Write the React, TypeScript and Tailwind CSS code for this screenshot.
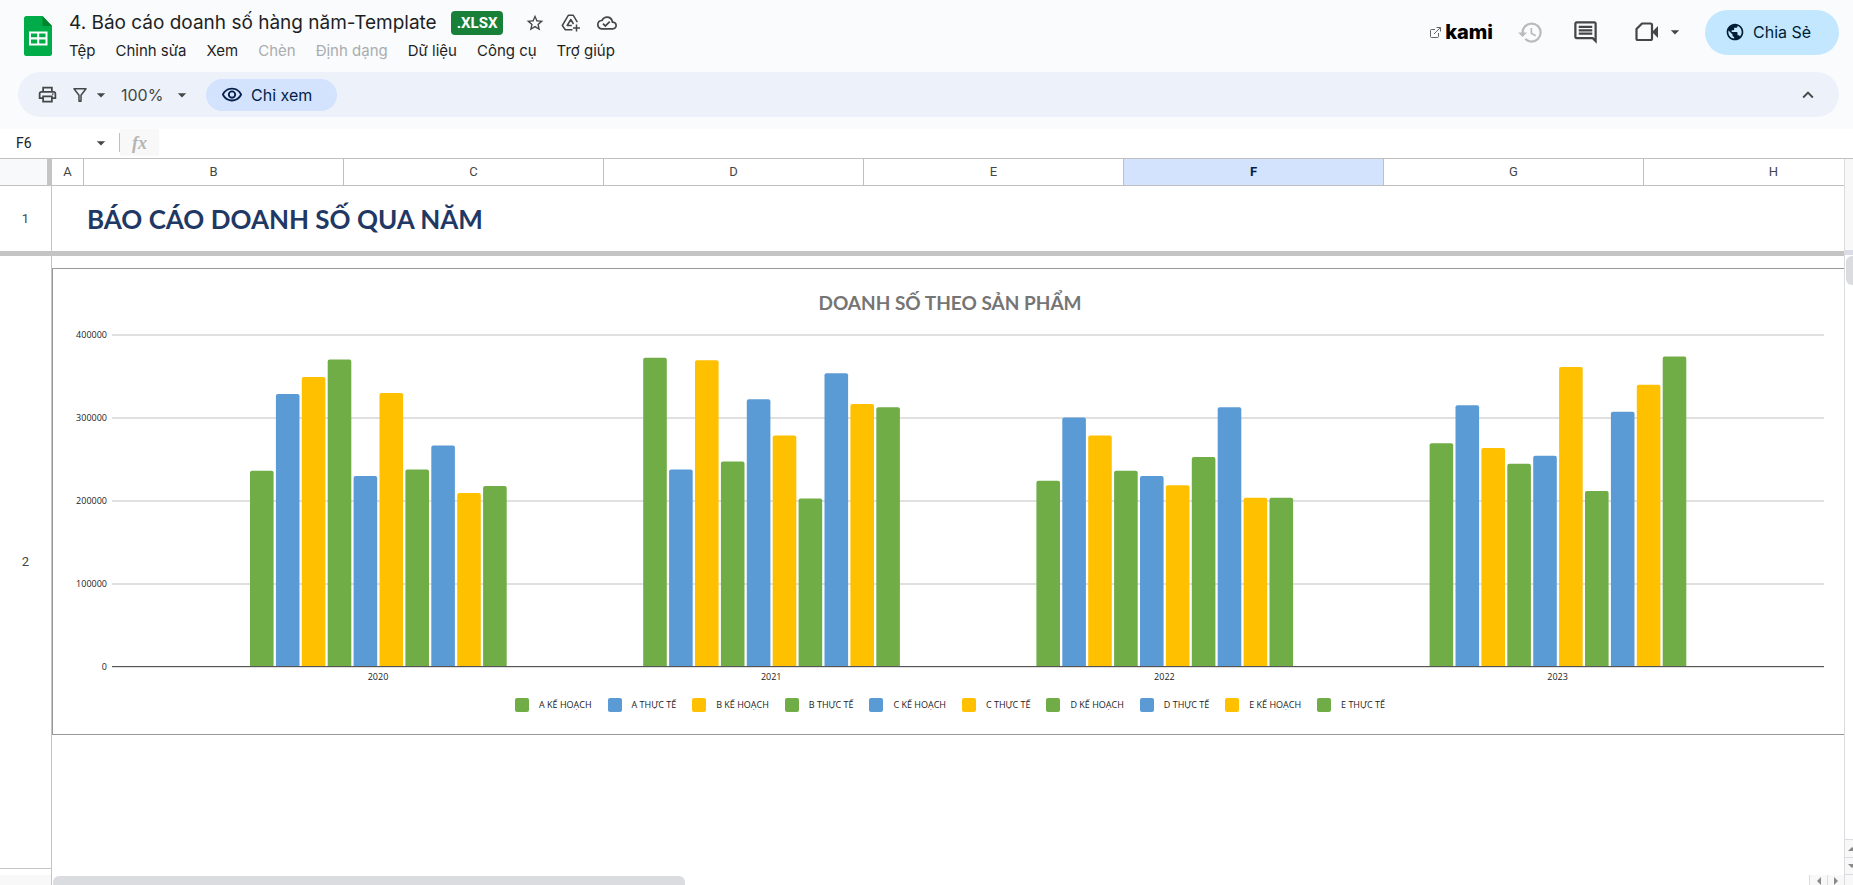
import { useState } from 'react'
import type { ReactNode } from 'react'
import {
  MdArrowDropDown,
  MdHistory,
  MdKeyboardArrowUp,
  MdOutlineCloudDone,
  MdOutlineComment,
  MdOutlinePrint,
  MdOutlineVisibility,
  MdPublic,
  MdStarBorder,
} from 'react-icons/md'

interface MenuItem {
  label: string
  disabled?: boolean
}

interface YearGroup {
  year: string
  values: number[]
}

const MENU: MenuItem[] = [
  { label: 'Tệp' },
  { label: 'Chỉnh sửa' },
  { label: 'Xem' },
  { label: 'Chèn', disabled: true },
  { label: 'Định dạng', disabled: true },
  { label: 'Dữ liệu' },
  { label: 'Công cụ' },
  { label: 'Trợ giúp' },
]

const COLUMNS = ['B', 'C', 'D', 'E', 'F', 'G', 'H']

const GREEN = '#70ad47'
const BLUE = '#5b9bd5'
const YELLOW = '#ffc000'

const SERIES = [
  { name: 'A KẾ HOẠCH', color: GREEN },
  { name: 'A THỰC TẾ', color: BLUE },
  { name: 'B KẾ HOẠCH', color: YELLOW },
  { name: 'B THỰC TẾ', color: GREEN },
  { name: 'C KẾ HOẠCH', color: BLUE },
  { name: 'C THỰC TẾ', color: YELLOW },
  { name: 'D KẾ HOẠCH', color: GREEN },
  { name: 'D THỰC TẾ', color: BLUE },
  { name: 'E KẾ HOẠCH', color: YELLOW },
  { name: 'E THỰC TẾ', color: GREEN },
]

const DATA: YearGroup[] = [
  { year: '2020', values: [236500, 329000, 349500, 370500, 230000, 330000, 238000, 267000, 209500, 218000] },
  { year: '2021', values: [372500, 238000, 369500, 247500, 322500, 279000, 203000, 354000, 317000, 313000] },
  { year: '2022', values: [224500, 300500, 279000, 236500, 230000, 219000, 253000, 313000, 204000, 204000] },
  { year: '2023', values: [269500, 315500, 264000, 245000, 254500, 361500, 212000, 307500, 340000, 374000] },
]

const TICKS = [400000, 300000, 200000, 100000, 0]

// Plot geometry, in the units of the chart's viewBox
const PLOT_LEFT = 59
const PLOT_RIGHT = 1771
const PLOT_TOP = 10
const PLOT_HEIGHT = 332
const GROUP_START = 197
const GROUP_STEP = 393.2
const BAR_STEP = 25.9
const BAR_WIDTH = 23.6

function yFor(value: number): number {
  return PLOT_TOP + PLOT_HEIGHT * (1 - value / 400000)
}

function barPath(x: number, value: number): string {
  const top = yFor(value)
  const bottom = yFor(0)
  return `M${x} ${bottom}V${top + 2}q0 -2 2 -2h${BAR_WIDTH - 4}q2 0 2 2V${bottom}z`
}

function SheetsLogo() {
  return (
    <svg width="28" height="40" viewBox="0 0 28 40" aria-hidden="true">
      <path d="M2.500 0H18.500L28 10V37.500a2.500 2.500 0 0 1-2.500 2.500h-23A2.500 2.500 0 0 1 0 37.500v-35A2.500 2.500 0 0 1 2.500 0z" fill="#00ac47" />
      <path d="M18.500 0L28 10h-9.500z" fill="#00832d" />
      <path d="M5 15.500h18.500v14H5zM7 17.500v3.800h6.200v-3.800zm8.200 0v3.800h6.300v-3.800zM7 23.500v4h6.200v-4zm8.200 0v4h6.300v-4z" fill="#fff" fillRule="evenodd" />
    </svg>
  )
}

function DriveAddIcon() {
  return (
    <svg width="20" height="20" viewBox="0 0 20 20" fill="none" stroke="#444746" strokeWidth="1.500" strokeLinejoin="round" aria-hidden="true">
      <path d="M11.500 16.800H4.300L1.300 12.500L7.300 2.300H12.300L16.300 9.200" />
      <path d="M10.800 12.500H6.200L9.800 6.500L12.500 11" />
      <path d="M15.500 11.500v7M12 15h7" />
    </svg>
  )
}

function CameraIcon() {
  return (
    <svg width="24" height="20" viewBox="0 0 24 20" fill="none" aria-hidden="true">
      <path d="M7 1.500H15.500a1.500 1.500 0 0 1 1.500 1.500V16.500a1.500 1.500 0 0 1-1.500 1.500H3A1.500 1.500 0 0 1 1.500 16.500V7z" stroke="#444746" strokeWidth="2.200" strokeLinejoin="round" />
      <path d="M17 10l6-6v12z" fill="#444746" />
    </svg>
  )
}

function FilterIcon() {
  return (
    <svg width="16" height="16" viewBox="0 0 16 16" fill="none" aria-hidden="true">
      <path d="M2 1.800h12L9 8.200v6H7v-6z" stroke="#444746" strokeWidth="1.500" strokeLinejoin="round" />
    </svg>
  )
}

function ExternalIcon() {
  return (
    <svg width="11" height="11" viewBox="0 0 11 11" fill="none" stroke="#555" strokeWidth="0.900" aria-hidden="true">
      <path d="M5 2.500H1.500a1 1 0 0 0-1 1V9.500a1 1 0 0 0 1 1H7.500a1 1 0 0 0 1-1V6" />
      <path d="M4 7L10.300.700M6.500.500h4v4" />
    </svg>
  )
}

function IconButton({ label, children }: { label: string; children: ReactNode }) {
  return (
    <button type="button" aria-label={label} className="flex items-center justify-center">
      {children}
    </button>
  )
}

function Header() {
  return (
    <header className="flex h-18 items-start pr-3.5 pl-6">
      <div className="mt-4 shrink-0">
        <SheetsLogo />
      </div>
      <div className="ml-[17px] flex-1">
        <div className="mt-[11px] flex h-6 items-center">
          <h1 className="text-[19px] leading-6 whitespace-nowrap text-[#1f1f1f]">4. Báo cáo doanh số hàng năm-Template</h1>
          <span className="ml-3.5 h-6 rounded bg-[#188038] px-1.5 font-['Roboto'] text-[15px] leading-6 font-bold text-white">.XLSX</span>
          <div className="ml-[22px] flex items-center gap-4 text-[#444746]">
            <IconButton label="Gắn dấu sao"><MdStarBorder size={20} /></IconButton>
            <IconButton label="Thêm vào Drive"><DriveAddIcon /></IconButton>
            <IconButton label="Trạng thái lưu"><MdOutlineCloudDone size={20} /></IconButton>
          </div>
        </div>
        <nav className="mt-1 flex gap-5 text-[15px] leading-6 text-[#1f1f1f]">
          {MENU.map((item) => (
            <button key={item.label} type="button" disabled={item.disabled} className="whitespace-nowrap disabled:text-[#aaacae]">
              {item.label}
            </button>
          ))}
        </nav>
      </div>
      <div className="mt-2.5 flex h-11 shrink-0 items-center">
        <a href="#kami" className="flex items-center gap-1 text-black">
          <ExternalIcon />
          <span className="text-xl leading-6 font-extrabold">kami</span>
        </a>
        <div className="ml-6 flex items-center gap-7 text-[#444746]">
          <span className="text-[#b9bbbd]">
            <IconButton label="Lịch sử"><MdHistory size={27} /></IconButton>
          </span>
          <IconButton label="Nhận xét"><MdOutlineComment size={27} /></IconButton>
          <button type="button" aria-label="Cuộc gọi" className="ml-2 flex items-center gap-1.5">
            <CameraIcon />
            <MdArrowDropDown size={20} />
          </button>
        </div>
        <button type="button" className="ml-5 flex h-[45px] w-[134px] items-center gap-2 rounded-full bg-[#c2e7ff] pl-5 text-base text-[#001d35]">
          <MdPublic size={20} />
          Chia Sẻ
        </button>
      </div>
    </header>
  )
}

function Toolbar() {
  return (
    <div className="mr-3.5 mb-3 ml-4.5 flex h-[45px] items-center rounded-full bg-[#edf2fa] pr-5 pl-[19px] text-[#444746]">
      <IconButton label="In"><MdOutlinePrint size={21} /></IconButton>
      <button type="button" aria-label="Bộ lọc" className="ml-3.5 flex items-center gap-[3px]">
        <FilterIcon />
        <MdArrowDropDown size={20} />
      </button>
      <label className="ml-2.5 flex items-center gap-[9px]">
        <select aria-label="Thu phóng" defaultValue="100%" className="w-[42px] appearance-none bg-transparent text-base">
          <option>100%</option>
        </select>
        <MdArrowDropDown size={20} />
      </label>
      <button type="button" className="ml-3.5 flex h-8 w-[131px] items-center gap-2 rounded-full bg-[#d3e3fd] pl-[15px] text-base text-[#041e49]">
        <MdOutlineVisibility size={22} />
        Chỉ xem
      </button>
      <div className="ml-auto">
        <IconButton label="Ẩn trình đơn"><MdKeyboardArrowUp size={22} /></IconButton>
      </div>
    </div>
  )
}

function FormulaBar() {
  const [cell, setCell] = useState('F6')
  return (
    <div className="flex h-[30px] items-center border-b border-[#c0c0c0] bg-white pb-0.5">
      <input
        aria-label="Hộp tên"
        value={cell}
        onChange={(e) => setCell(e.target.value)}
        className="w-[91px] pl-4 font-['Roboto'] text-sm text-[#202124] outline-none"
      />
      <MdArrowDropDown size={20} color="#444746" />
      <div className="ml-2 h-[19px] w-px bg-[#c0c0c0]" />
      <label htmlFor="formula" className="flex h-full w-[39px] items-center justify-center bg-[#f8f8f8] font-['Liberation_Serif'] text-lg leading-5 font-bold text-[#b4b4b4] italic">
        fx
      </label>
      <input id="formula" className="h-full flex-1 px-2 font-['Roboto'] text-sm outline-none" />
    </div>
  )
}

function SalesChart() {
  return (
    <figure className="mt-3 flex h-[467px] w-[1796px] flex-col border border-[#999] bg-white">
      <figcaption className="mt-[18px] text-center font-['Lato','Open_Sans',sans-serif] text-[19px] leading-8 font-bold text-[#757575]">
        DOANH SỐ THEO SẢN PHẨM
      </figcaption>
      <svg viewBox="0 0 1794 370" className="mt-1.5 h-[370px] w-full shrink-0 font-['Open_Sans'] text-[9px]" role="img" aria-label="Doanh số theo sản phẩm">
        {TICKS.map((tick) => (
          <g key={tick}>
            <rect x={PLOT_LEFT} y={yFor(tick) - 1} width={PLOT_RIGHT - PLOT_LEFT} height="2" fill="#e0e0e0" />
            <text x="54" y={yFor(tick) + 3} textAnchor="end" fill="#222">{tick}</text>
          </g>
        ))}
        {DATA.map((group, g) => {
          const start = GROUP_START + g * GROUP_STEP
          return (
            <g key={group.year}>
              {group.values.map((value, i) => (
                <path key={i} d={barPath(start + i * BAR_STEP, value)} fill={SERIES[i].color} />
              ))}
              <text x={start + 128} y={yFor(0) + 13} textAnchor="middle" fill="#222">{group.year}</text>
            </g>
          )
        })}
        <rect x={PLOT_LEFT} y={yFor(0) - 1} width={PLOT_RIGHT - PLOT_LEFT} height="1" fill="#555" />
      </svg>
      <ul className="mt-0.5 flex items-center justify-center gap-4 font-['Open_Sans'] text-[9px] leading-4 text-[#222]">
        {SERIES.map((s) => (
          <li key={s.name} className="flex items-center gap-2.5">
            <span className="size-3.5 rounded-xs" style={{ backgroundColor: s.color }} />
            {s.name}
          </li>
        ))}
      </ul>
    </figure>
  )
}

function Sheet() {
  return (
    <table className="w-[1904px] table-fixed border-separate border-spacing-0 font-['Roboto'] text-[13px] text-[#444746]">
      <colgroup>
        <col className="w-[52px]" />
        <col className="w-8" />
        {COLUMNS.map((c) => <col key={c} className="w-[260px]" />)}
      </colgroup>
      <thead>
        <tr className="h-[27px]">
          <th aria-label="Chọn tất cả" className="border-r-[5px] border-b border-[#c0c0c0] border-r-[#c4c4c4] bg-[#f8f9fa] p-0" />
          <th scope="col" className="border-r border-b border-[#c0c0c0] p-0 font-normal">A</th>
          {COLUMNS.map((c) => (
            <th
              key={c}
              scope="col"
              className={`border-r border-b border-[#c0c0c0] p-0 ${c === 'F' ? 'bg-[#d3e3fd] font-bold text-[#041e49]' : 'font-normal'}`}
            >
              {c}
            </th>
          ))}
        </tr>
      </thead>
      <tbody>
        <tr className="h-[70px]">
          <th scope="row" className="border-r border-b-[5px] border-[#c4c4c4] p-0 font-normal">1</th>
          <td className="border-b-[5px] border-[#c4c4c4] p-0" />
          <td colSpan={7} className="border-b-[5px] border-[#c4c4c4] py-0 pr-0 pl-[3px] font-['Lato','Open_Sans',sans-serif] text-[26px] leading-8 font-bold text-[#1f3864]">
            BÁO CÁO DOANH SỐ QUA NĂM
          </td>
        </tr>
        <tr className="h-[613px]">
          <th scope="row" className="border-r border-b border-[#c4c4c4] p-0 font-normal">2</th>
          <td colSpan={8} className="p-0 align-top">
            <SalesChart />
          </td>
        </tr>
        <tr className="h-20">
          <th scope="row" aria-label="3" className="border-r border-[#c4c4c4] p-0" />
          <td colSpan={8} className="p-0" />
        </tr>
      </tbody>
    </table>
  )
}

function Arrow({ d }: { d: string }) {
  return (
    <svg width="8" height="8" viewBox="0 0 8 8" fill="#8a8a8a" className="shrink-0" aria-hidden="true">
      <path d={d} />
    </svg>
  )
}

function VerticalScrollbar() {
  return (
    <div className="flex w-[9px] shrink-0 flex-col overflow-hidden border-l border-[#dadce0]">
      <div className="h-[91px] shrink-0 bg-[#f8f8f8]" />
      <div className="h-[5px] shrink-0 bg-[#dadce6]" />
      <div className="mt-px ml-px h-[29px] w-4 shrink-0 rounded-md bg-[#dadce0]" />
      <button type="button" aria-label="Cuộn lên" className="mt-auto flex h-[18px] w-4 items-center border-t border-[#dadce0] bg-[#f8f8f8] pl-[3px]">
        <Arrow d="M0 6L4 2l4 4z" />
      </button>
      <button type="button" aria-label="Cuộn xuống" className="flex h-[18px] w-4 items-center border-y border-[#dadce0] bg-[#f8f8f8] pl-[3px]">
        <Arrow d="M0 2h8L4 6z" />
      </button>
    </div>
  )
}

function HorizontalScrollbar() {
  return (
    <div className="flex h-2.5 shrink-0 overflow-hidden bg-white">
      <div className="w-[52px] shrink-0 border-r border-[#c4c4c4] bg-[#f8f8f8]" />
      <div className="flex-1 pt-px pl-px">
        <div className="h-4 w-[36%] rounded-md bg-[#dadce0]" />
      </div>
      <button type="button" aria-label="Cuộn trái" className="flex h-3 w-[18px] items-center justify-center border-l border-[#dadce0] bg-[#f8f8f8]">
        <Arrow d="M6 0v8L2 4z" />
      </button>
      <button type="button" aria-label="Cuộn phải" className="flex h-3 w-[17px] items-center justify-center border-l border-[#dadce0] bg-[#f8f8f8]">
        <Arrow d="M2 0v8l4-4z" />
      </button>
      <div className="w-[9px] border-l border-[#dadce0] bg-[#f8f8f8]" />
    </div>
  )
}

export default function App() {
  return (
    <div className="flex h-screen flex-col overflow-hidden bg-[#f9fbfd] font-['Inter',sans-serif]">
      <Header />
      <Toolbar />
      <FormulaBar />
      <main className="flex min-h-0 flex-1 bg-white">
        <div className="min-w-0 flex-1 overflow-hidden">
          <Sheet />
        </div>
        <VerticalScrollbar />
      </main>
      <HorizontalScrollbar />
    </div>
  )
}
